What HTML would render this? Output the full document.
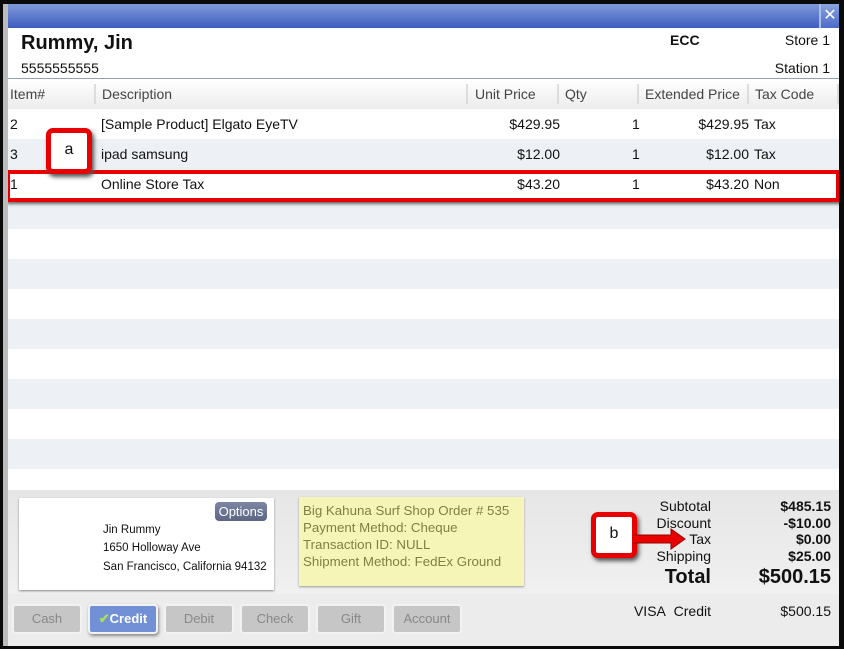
<!DOCTYPE html>
<html><head><style>
*{margin:0;padding:0;box-sizing:border-box}
body{width:844px;height:649px;background:#0a0a0a;font-family:"Liberation Sans",sans-serif;position:relative;overflow:hidden;color:#111}
.a{position:absolute;white-space:nowrap}
#win{position:absolute;left:3px;top:4px;width:836px;height:642px;background:#fff;border-left:5px solid #bbb;overflow:hidden}
#title{position:absolute;left:0;top:0;width:100%;height:24px;background:linear-gradient(#7f9ad8,#3d5cc0)}
#x{position:absolute;right:0;top:0;width:20px;height:24px;background:linear-gradient(#8aa3df,#4c6bc8);border-left:2px solid #a9bde9;color:#fff;font-size:16px;text-align:center;line-height:24px}
.hd{font-size:14px;color:#444;top:82px}
.sep{position:absolute;top:80px;width:2px;height:20px;background:#ddd}
.row{position:absolute;left:0;width:100%;height:30px}
.c{position:absolute;font-size:14px;top:7px}
.btn{position:absolute;top:600px;width:70px;height:30px;background:#c6c6c6;border:2px solid #f2f2f2;border-radius:4px;color:#888;font-size:13px;text-align:center;line-height:26px}
.tot{font-size:14px;color:#111}
</style></head><body>
<div id="win">
<div id="title"><div id="x">✕</div></div>
<div class="a" style="left:13px;top:28px;font-size:20px;font-weight:bold">Rummy, Jin</div>
<div class="a" style="left:13px;top:56px;font-size:14px">5555555555</div>
<div class="a" style="left:662px;top:28px;font-size:14px;font-weight:bold">ECC</div>
<div class="a" style="right:9px;top:28px;font-size:14px">Store 1</div>
<div class="a" style="right:9px;top:56px;font-size:14px">Station 1</div>
<div style="position:absolute;left:0;top:74px;width:100%;height:1px;background:#8fa0b8"></div>
<div style="position:absolute;left:0;top:75px;width:100%;height:30px;background:linear-gradient(#fff,#ececec)"></div>
<div class="a hd" style="left:2px">Item#</div>
<div class="sep" style="left:86px"></div>
<div class="a hd" style="left:94px">Description</div>
<div class="sep" style="left:458px"></div>
<div class="a hd" style="left:467px">Unit Price</div>
<div class="sep" style="left:549px"></div>
<div class="a hd" style="left:557px">Qty</div>
<div class="sep" style="left:629px"></div>
<div class="a hd" style="left:637px">Extended Price</div>
<div class="sep" style="left:739px"></div>
<div class="a hd" style="left:747px">Tax Code</div>
<div class="sep" style="left:829px"></div>

<div class="row" style="top:105px;background:#fff"><span class="c" style="left:2px">2</span><span class="c" style="left:93px">[Sample Product] Elgato EyeTV</span><span class="c" style="right:279px">$429.95</span><span class="c" style="left:624px">1</span><span class="c" style="right:90px">$429.95</span><span class="c" style="left:746px">Tax</span></div>
<div class="row" style="top:135px;background:#edf1f5"><span class="c" style="left:2px">3</span><span class="c" style="left:93px">ipad samsung</span><span class="c" style="right:279px">$12.00</span><span class="c" style="left:624px">1</span><span class="c" style="right:90px">$12.00</span><span class="c" style="left:746px">Tax</span></div>
<div class="row" style="top:165px;background:#fff"><span class="c" style="left:2px">1</span><span class="c" style="left:93px">Online Store Tax</span><span class="c" style="right:279px">$43.20</span><span class="c" style="left:624px">1</span><span class="c" style="right:90px">$43.20</span><span class="c" style="left:746px">Non</span></div>
<div class="row" style="top:195px;background:#edf1f5"></div>
<div class="row" style="top:255px;background:#edf1f5"></div>
<div class="row" style="top:315px;background:#edf1f5"></div>
<div class="row" style="top:375px;background:#edf1f5"></div>
<div class="row" style="top:435px;background:#edf1f5"></div>
<div style="position:absolute;left:-2px;top:166px;width:834px;height:32px;border:4px solid #e80000;box-shadow:1px 2px 3px #666"></div>

<div style="position:absolute;left:0;top:486px;width:100%;height:104px;background:linear-gradient(#e6e6e6,#f0f0f0)"></div>
<div style="position:absolute;left:0;top:590px;width:100%;height:52px;background:#ececec"></div>
<div style="position:absolute;left:11px;top:494px;width:255px;height:92px;background:#fff;box-shadow:0 1px 2px #888"></div>
<div class="a" style="left:207px;top:498px;width:52px;height:19px;background:linear-gradient(#7d86a3,#5c6585);border-radius:4px;color:#fff;font-size:13px;text-align:center;line-height:19px">Options</div>
<div class="a" style="left:95px;top:520px;font-size:11.5px">Jin Rummy</div>
<div class="a" style="left:95px;top:538px;font-size:11.5px">1650 Holloway Ave</div>
<div class="a" style="left:95px;top:557px;font-size:11.5px">San Francisco, California 94132</div>
<div style="position:absolute;left:291px;top:493px;width:225px;height:89px;background:#f5f5b8;box-shadow:0 1px 2px #999"></div>
<div class="a" style="left:295px;top:498px;font-size:13.3px;color:#808040;line-height:17px">Big Kahuna Surf Shop Order # 535<br>Payment Method: Cheque<br>Transaction ID: NULL<br>Shipment Method: FedEx Ground</div>
<div class="a tot" style="right:128px;top:494px;text-align:right;line-height:16.5px">Subtotal<br>Discount<br>Tax<br>Shipping</div>
<div class="a tot" style="right:8px;top:494px;text-align:right;font-weight:bold;line-height:16.5px">$485.15<br>-$10.00<br>$0.00<br>$25.00</div>
<div class="a" style="right:128px;top:562px;font-size:20px;font-weight:bold">Total</div>
<div class="a" style="right:8px;top:562px;font-size:20px;font-weight:bold">$500.15</div>
<div class="a" style="right:128px;top:599px;font-size:14px">VISA&nbsp; Credit</div>
<div class="a" style="right:8px;top:599px;font-size:14px">$500.15</div>

<div class="btn" style="left:4px">Cash</div>
<div class="btn" style="left:80px;background:#7190d6;color:#fff;font-weight:bold;box-shadow:1px 2px 3px #888"><span style="color:#a8e05a">✔</span>Credit</div>
<div class="btn" style="left:156px">Debit</div>
<div class="btn" style="left:232px">Check</div>
<div class="btn" style="left:308px">Gift</div>
<div class="btn" style="left:384px">Account</div>

<div class="a" style="left:38px;top:124px;width:46px;height:46px;background:#fff;border:5px solid #e80000;border-radius:7px;box-shadow:2px 3px 4px #555;text-align:center;line-height:34px;font-size:16px">a</div>
<div class="a" style="left:583px;top:508px;width:46px;height:46px;background:#fff;border:5px solid #e80000;border-radius:7px;box-shadow:2px 3px 4px #555;text-align:center;line-height:34px;font-size:16px">b</div>
<svg class="a" style="left:625px;top:523px" width="60" height="24"><polygon points="0,8 38,8 38,2 52,12 38,22 38,16 0,16" fill="#e80000" stroke="#900" stroke-width="1"/></svg>
</div>
</body></html>
